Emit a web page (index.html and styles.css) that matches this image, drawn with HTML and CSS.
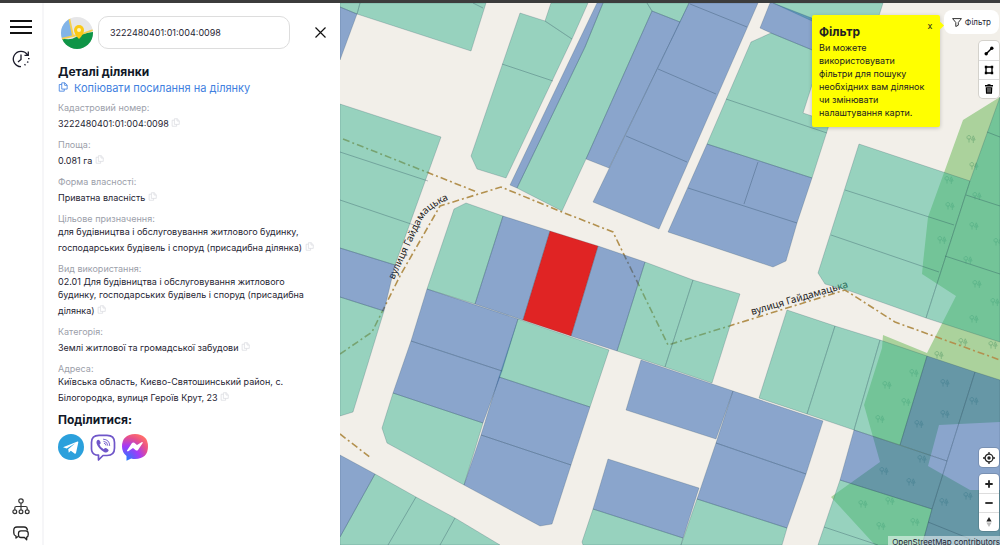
FILE: index.html
```
<!DOCTYPE html>
<html lang="uk">
<head>
  <meta charset="UTF-8">
  <meta name="viewport" content="width=device-width, initial-scale=1.0">
  <title>Кадастрова карта</title>
  <link rel="stylesheet" href="styles.css">
</head>
<body>
  <!-- Shared icons -->
  <svg class="sprite" aria-hidden="true">
    <symbol id="copy" viewBox="0 0 12 12">
      <path d="M4.500 1h3.800L11 3.700V8.500H4.500zM8 1v3h3M4.500 3H1.500v8h6V8.500" fill="none" stroke="currentColor" stroke-linejoin="round"/>
    </symbol>
    <symbol id="tree" viewBox="0 0 10 10">
      <path d="M3 1.500a2 2 0 0 0-1.500 3.400q1.500 1 2.700 0A2 2 0 0 0 3 1.500zM3 4v4.500M7.300 1.800L5.500 6h3.600zM7.300 4v5" fill="none" stroke="#3c8a5a" stroke-width=".9"/>
    </symbol>
  </svg>

  <div class="topbar"></div>
  <div class="app">
    <nav class="sidebar">
      <button class="icon-button" aria-label="Меню">
        <svg width="22" height="14" viewBox="0 0 22 14"><path d="M0 1h22M0 7h22M0 13h22" stroke="#111" stroke-width="1.800"/></svg>
      </button>
      <button class="icon-button" aria-label="Історія">
        <svg width="18" height="18" viewBox="0 0 18 18" fill="none" stroke="#1a1a2a" stroke-width="1.300">
          <path d="M9 16.700A7.700 7.700 0 1 1 15.600 5M16.300 1.500V5.300H12.500M9 4.500v5l-3 2.500"/>
          <path d="M16.800 8v1.300M16 11.500l-.6 1.200M13.500 14.400l-1 .8" stroke-width="1.500"/>
        </svg>
      </button>
      <span class="spacer"></span>
      <button class="icon-button" aria-label="Структура">
        <svg width="18" height="17" viewBox="0 0 18 17" fill="none" stroke="#333" stroke-width="1.200">
          <circle cx="9" cy="3" r="2.200"/><circle cx="2.800" cy="13.700" r="1.900"/><circle cx="9" cy="13.700" r="1.900"/><circle cx="15.200" cy="13.700" r="1.900"/>
          <path d="M9 5.200v6.600M2.800 11.800V10q0-1.500 1.500-1.500h9.400q1.500 0 1.500 1.500v1.800"/>
        </svg>
      </button>
      <button class="icon-button" aria-label="Чат">
        <svg width="16" height="15" viewBox="0 0 16 15" fill="none" stroke="#222" stroke-width="1.300" stroke-linejoin="round">
          <path d="M5 10.500l-2 1.500v-1.800Q.8 9.500.8 7V4Q.8 1 4 1h7q3 0 3.500 3.500"/>
          <path d="M8 4.800h4.700q2.500 0 2.500 2.500v1.500q0 2-1.500 2.400V13.800l-2.200-2.300H8Q5.500 11.500 5.500 9V7.300Q5.500 4.800 8 4.800z"/>
        </svg>
      </button>
    </nav>

    <aside class="panel">
      <form class="search">
        <svg class="logo" viewBox="0 0 32 32">
          <defs><clipPath id="logo-clip"><circle cx="16" cy="16" r="16"/></clipPath></defs>
          <g clip-path="url(#logo-clip)">
            <path d="M0 0h32v32H0z" fill="#e6e6e8"/>
            <path d="M0 0h8l4 19-12 3z" fill="#82b4e8"/>
            <path d="M0 21q9 3 15-1t17-5v17H0z" fill="#0f9547"/>
            <path d="M8 0l4 19L0 22M12 19q10-2 20-6" fill="none" stroke="#f5cf52" stroke-width="1.800"/>
            <path d="M18 22q-5-5-5-9a5 5 0 0 1 10 0q0 4-5 9z" fill="#fbc916"/>
            <circle cx="18" cy="13" r="2" fill="#fff3c0"/>
          </g>
        </svg>
        <input class="search-input" type="text" value="3222480401:01:004:0098" aria-label="Кадастровий номер">
        <button class="close-button" type="button" aria-label="Закрити">
          <svg width="11" height="11" viewBox="0 0 11 11"><path d="M.5.5l10 10M10.500.5l-10 10" stroke="#111" stroke-width="1.200"/></svg>
        </button>
      </form>

      <h1 class="title">Деталі ділянки</h1>
      <a class="copy-link" href="#"><svg class="copy-link-icon"><use href="#copy"/></svg>Копіювати посилання на ділянку</a>

      <dl class="details">
        <div class="detail">
          <dt>Кадастровий номер:</dt>
          <dd>3222480401:01:004:0098 <svg class="copy"><use href="#copy"/></svg></dd>
        </div>
        <div class="detail">
          <dt>Площа:</dt>
          <dd>0.081 га <svg class="copy"><use href="#copy"/></svg></dd>
        </div>
        <div class="detail">
          <dt>Форма власності:</dt>
          <dd>Приватна власність <svg class="copy"><use href="#copy"/></svg></dd>
        </div>
        <div class="detail">
          <dt>Цільове призначення:</dt>
          <dd>для будівництва і обслуговування житлового будинку, господарських будівель і споруд (присадибна ділянка) <svg class="copy"><use href="#copy"/></svg></dd>
        </div>
        <div class="detail">
          <dt>Вид використання:</dt>
          <dd>02.01 Для будівництва і обслуговування житлового будинку, господарських будівель і споруд (присадибна ділянка) <svg class="copy"><use href="#copy"/></svg></dd>
        </div>
        <div class="detail">
          <dt>Категорія:</dt>
          <dd>Землі житлової та громадської забудови <svg class="copy"><use href="#copy"/></svg></dd>
        </div>
        <div class="detail">
          <dt>Адреса:</dt>
          <dd>Київська область, Києво-Святошинський район, с. Білогородка, вулиця Героїв Крут, 23 <svg class="copy"><use href="#copy"/></svg></dd>
        </div>
      </dl>

      <h2 class="title">Поділитися:</h2>
      <div class="share">
        <a href="#" aria-label="Telegram">
          <svg width="26" height="26" viewBox="0 0 26 26"><circle cx="13" cy="13" r="13" fill="#2ba0dc"/><path d="M5 13.300L19.500 7.600q1-.2.8 1L18 19q-.4 1.200-1.500.6L12.800 16.800l-2 2-.6-3.600 7-6-8.500 5.300z" fill="#fff"/></svg>
        </a>
        <a href="#" aria-label="Viber">
          <svg width="26" height="27" viewBox="0 0 26 27" fill="none" stroke="#6f56c9" stroke-linecap="round">
            <path d="M6 21Q1.500 19.500 1.500 15V8.500Q1.500 1.300 9 1.300h8q7.500 0 7.500 7.200V14q0 7.500-7.500 7.500h-4L8.500 26v-4.800z" stroke-width="1.700" stroke-linejoin="round"/>
            <path d="M7 6.500q1.800-2 3.500 1.500.8 1.500-1 2.500 1 3.500 4.300 4.700 1.200-1.900 2.700-1 3.300 1.900 1.500 3.300-1.600 1.700-4 .4Q8.500 15 6.700 9.800 6 8 7 6.500z" fill="#6f56c9" stroke="none"/>
            <path d="M13.500 5.200q6 .3 6.200 6.300M13.800 7.300q3.800.3 4 4M14.300 9.300q1.600.2 1.700 1.800" stroke-width=".9"/>
          </svg>
        </a>
        <a href="#" aria-label="Messenger">
          <svg width="26" height="27" viewBox="0 0 26 27">
            <defs><radialGradient id="msg" cx=".15" cy="1" r="1.100"><stop offset="0" stop-color="#1a80ff"/><stop offset=".5" stop-color="#a33af7"/><stop offset=".8" stop-color="#e6508c"/><stop offset="1" stop-color="#ff6d6b"/></radialGradient></defs>
            <path d="M13 0q13 .5 13 12.500T13 25q-2 0-3.800-.5L4.500 26.700V22Q0 18.500 0 12.500 0 .5 13 0z" fill="url(#msg)"/>
            <path d="M5 16.500L10 9q1-1 2.300-.2L15 11l4.500-2.800q1.700-.5 1.200.8L16 16q-1 1-2.300.2L11 14l-4.700 3.200q-1.600.5-1.300-.7z" fill="#fff"/>
          </svg>
        </a>
      </div>
    </aside>

    <main class="map">
      <svg class="map-canvas" viewBox="340 3 660 542" preserveAspectRatio="xMidYMid slice">
        <!-- Woodland -->
        <path class="wood" fill-rule="evenodd" d="M1000 97L963 120 928 217 923 263 922 274 956 296 927 353 883 335 882 348 864 405 880 462 831 497 875 545H1000zM939 425L1000 422V490H970L928 466z"/>
        <g class="trees">
          <use href="#tree" x="966" y="134" width="10" height="10"/>
          <use href="#tree" x="969" y="161" width="10" height="10"/>
          <use href="#tree" x="944" y="175" width="10" height="10"/>
          <use href="#tree" x="945" y="201" width="10" height="10"/>
          <use href="#tree" x="972" y="191" width="10" height="10"/>
          <use href="#tree" x="969" y="221" width="10" height="10"/>
          <use href="#tree" x="937" y="235" width="10" height="10"/>
          <use href="#tree" x="963" y="255" width="10" height="10"/>
          <use href="#tree" x="993" y="237" width="10" height="10"/>
          <use href="#tree" x="972" y="279" width="10" height="10"/>
          <use href="#tree" x="990" y="297" width="10" height="10"/>
          <use href="#tree" x="969" y="314" width="10" height="10"/>
          <use href="#tree" x="958" y="337" width="10" height="10"/>
          <use href="#tree" x="988" y="340" width="10" height="10"/>
          <use href="#tree" x="934" y="350" width="10" height="10"/>
          <use href="#tree" x="909" y="368" width="10" height="10"/>
          <use href="#tree" x="882" y="380" width="10" height="10"/>
          <use href="#tree" x="901" y="397" width="10" height="10"/>
          <use href="#tree" x="875" y="414" width="10" height="10"/>
          <use href="#tree" x="940" y="378" width="10" height="10"/>
          <use href="#tree" x="940" y="409" width="10" height="10"/>
          <use href="#tree" x="969" y="396" width="10" height="10"/>
          <use href="#tree" x="914" y="419" width="10" height="10"/>
          <use href="#tree" x="917" y="454" width="10" height="10"/>
          <use href="#tree" x="879" y="466" width="10" height="10"/>
          <use href="#tree" x="906" y="477" width="10" height="10"/>
          <use href="#tree" x="939" y="497" width="10" height="10"/>
          <use href="#tree" x="963" y="491" width="10" height="10"/>
          <use href="#tree" x="858" y="499" width="10" height="10"/>
          <use href="#tree" x="885" y="496" width="10" height="10"/>
          <use href="#tree" x="876" y="521" width="10" height="10"/>
          <use href="#tree" x="910" y="517" width="10" height="10"/>
        </g>

        <!-- Tracks and street names -->
        <path class="track" d="M343 139L477 192M340 354L372 332 401 274 440 206 501 187 562 212 613 232 668 345 845 290 895 322 1000 360M340 434L371 458"/>
        <path id="street-west" d="M394 280L421 222Q427 209 448 200" fill="none"/>
        <path id="street-east" d="M752 315L860 284" fill="none"/>
        <text class="street"><textPath href="#street-west">вулиця Гайдамацька</textPath></text>
        <text class="street"><textPath href="#street-east">вулиця Гайдамацька</textPath></text>

        <!-- Green parcels -->
        <g class="parcel green">
          <path d="M357 14L471 51 486 3H360z"/>
          <path d="M340 3H360L357 14 340 7z"/>
          <path d="M520 13L545 21 572 39 506 178 477 169 471 156z"/>
          <path d="M551 3H588L572 39 545 21z"/>
          <path d="M603 3H647L652 11 586 159 562 211 517 188 585 47z"/>
          <path d="M647 3H689L680 22 652 11z"/>
          <path d="M773 3H883L871 41 812 21z"/>
          <path d="M751 42L771 33 822 54 803 113 830 122 812 178 707 144z"/>
          <path d="M340 104L441 137 395 265 340 248z"/>
          <path d="M340 297L384 311 353 412 340 416z"/>
          <path d="M375 474L416 497 455 518 500 545H340V537z"/>
          <path d="M466 203L503 216 475 304 427 289 454 209z"/>
          <path d="M645 262L693 280 665 367 617 351z"/>
          <path d="M693 280L740 294 712 383 665 367z"/>
          <path d="M518 319L609 350 590 407 499 377z"/>
          <path d="M393 393L483 423 464 485 387 443 382 428z"/>
          <path d="M593 509L683 538 681 545H583L582 542z"/>
          <path d="M697 499L787 528 782 545H681z"/>
          <path d="M787 310L835 326 807 414 759 398z"/>
          <path d="M835 326L880 340 854 430 807 414z"/>
          <path d="M880 340L927 356 900 445 854 430z"/>
          <path d="M840 480L932 509 922 545H818z"/>
          <path d="M859 144L970 181 926 318 850 291 825 284 818 273z"/>
          <path d="M1000 97L970 181 926 318 1000 342z"/>
        </g>

        <!-- Blue parcels -->
        <g class="parcel blue">
          <path d="M340 7L357 14 340 60z"/>
          <path d="M597 3H603L585 47 517 188 510 185z"/>
          <path d="M652 11L680 22 609 168 586 159z"/>
          <path d="M689 3H758L659 229 593 202z"/>
          <path d="M770 3H773L871 41 864 69 822 54 771 33 760 28z"/>
          <path d="M707 144L812 178 797 223 786 261 773 267 668 232z"/>
          <path d="M340 248L395 265 384 311 340 297z"/>
          <path d="M340 455L375 474 340 537z"/>
          <path d="M503 216L550 231 523 320 475 304z"/>
          <path d="M598 246L645 262 617 351 571 336z"/>
          <path d="M427 289L518 319 502 371 411 341z"/>
          <path d="M411 341L502 371 483 423 393 393z"/>
          <path d="M499 377L590 407 571 465 481 435z"/>
          <path d="M481 435L571 465 552 524 540 526 464 485z"/>
          <path d="M641 360L733 391 716 439 626 410z"/>
          <path d="M733 391L823 421 806 474 716 443z"/>
          <path d="M716 443L806 474 787 528 697 499z"/>
          <path d="M608 459L699 488 683 538 593 509z"/>
          <path d="M927 356L975 372 947 461 900 445z"/>
          <path d="M975 372L1000 380V545H922L932 509 947 461z"/>
          <path d="M854 430L947 461 932 509 840 480z"/>
        </g>

        <path class="parcel selected" d="M550 231L598 246 571 336 523 320z"/>

        <!-- Inner parcel borders -->
        <path class="border" d="M473 3L483 8M502 64L553 81M690 4L747 27M658 69L716 94M626 136L687 162M726 99L827 133M688 188L797 223M758 162L744 204M845 190L954 225M831 235L939 272M987 132L1000 137M966 195L1000 206M945 256L1000 274M340 152L428 181M340 200L414 225M416 497L388 545M455 518L440 545M824 527L878 545M928 522L985 545"/>
      </svg>

      <div class="tooltip">
        <button class="tooltip-close" aria-label="Закрити підказку">x</button>
        <h3 class="tooltip-title">Фільтр</h3>
        <p>Ви можете використовувати фільтри для пошуку необхідних вам ділянок чи змінювати налаштування карти.</p>
      </div>

      <div class="controls">
        <button class="filter-button">
          <svg width="10" height="9" viewBox="0 0 10 9"><path d="M.6.6h8.800L6.300 4.500v2.700L3.800 8.500v-4z" fill="none" stroke="#333" stroke-linejoin="round"/></svg>
          Фільтр
        </button>
        <div class="control-group">
          <button aria-label="Лінія"><svg width="10" height="10" viewBox="0 0 10 10"><path d="M2 8l6-6" stroke="#000" stroke-width="1.500"/><circle cx="2.200" cy="7.800" r="1.700"/><circle cx="7.800" cy="2.200" r="1.700"/></svg></button>
          <button aria-label="Полігон"><svg width="10" height="10" viewBox="0 0 10 10"><path d="M2 2h6v6H2z" fill="none" stroke="#000" stroke-width="1.300"/><path d="M.8.8h2.400v2.400H.8zM6.800.8h2.400v2.400H6.800zM.8 6.800h2.400v2.400H.8zM6.800 6.800h2.400v2.400H6.800z"/></svg></button>
          <button aria-label="Видалити"><svg width="10" height="10" viewBox="0 0 10 10"><path d="M3.500 1V.2h3V1H9v1.500H1V1zM1.700 3.200h6.600L8 9.800H2z"/><path d="M4 4v4.500M6 4v4.500" stroke="#fff" stroke-width=".7"/></svg></button>
        </div>
        <span class="spacer"></span>
        <div class="control-group">
          <button aria-label="Моє місце"><svg width="12" height="12" viewBox="0 0 12 12"><circle cx="6" cy="6" r="3.900" fill="none" stroke="#222" stroke-width="1.300"/><circle cx="6" cy="6" r="1.700" fill="#222"/><path d="M6 0v2M6 10v2M0 6h2M10 6h2" stroke="#222" stroke-width="1.300"/></svg></button>
        </div>
        <div class="control-group">
          <button aria-label="Наблизити"><svg width="10" height="10" viewBox="0 0 10 10"><path d="M5 1.300v7.400M1.300 5h7.400" stroke="#222" stroke-width="1.800"/></svg></button>
          <button aria-label="Віддалити"><svg width="10" height="10" viewBox="0 0 10 10"><path d="M1.300 5h7.400" stroke="#222" stroke-width="1.800"/></svg></button>
          <button aria-label="Північ"><svg width="10" height="12" viewBox="0 0 10 12"><path d="M5 1l2.600 4.500H2.400z" fill="#222"/><path d="M5 11L2.400 6.500h5.200z" fill="#bbb"/></svg></button>
        </div>
      </div>
      <a class="attribution" href="#">OpenStreetMap contributors</a>
    </main>
  </div>
</body>
</html>
```
FILE: styles.css
```
* {
  box-sizing: border-box;
  margin: 0;
  padding: 0;
}

body {
  height: 100vh;
  display: flex;
  flex-direction: column;
  overflow: hidden;
  font-family: Inter, "Liberation Sans", sans-serif;
  font-size: 9px;
  line-height: 13px;
  color: #1f2533;
  background: #fff;
}

button {
  display: flex;
  align-items: center;
  justify-content: center;
  border: none;
  background: none;
  font: inherit;
  color: inherit;
  cursor: pointer;
}

a {
  color: inherit;
  text-decoration: none;
}

.sprite {
  display: none;
}

.spacer {
  flex: 1;
}

.topbar {
  flex: none;
  height: 3px;
  background: #3c3c3c;
}

.app {
  flex: 1;
  display: flex;
  min-height: 0;
}

/* Left icon bar */
.sidebar {
  flex: none;
  width: 44px;
  padding: 12px 0 0;
  display: flex;
  flex-direction: column;
  align-items: center;
  gap: 3px;
  border-right: 2px solid #f6f6f8;
}

.icon-button {
  width: 32px;
  height: 24px;
}

.icon-button:nth-child(2) {
  height: 34px;
}

/* Details panel */
.panel {
  flex: none;
  width: 296px;
  padding: 13px 13px 0 14px;
}

.search {
  display: flex;
  align-items: center;
  padding-left: 3px;
  margin-bottom: 15px;
}

.logo {
  flex: none;
  width: 32px;
  height: 32px;
}

.search-input {
  flex: 1;
  min-width: 0;
  height: 33px;
  margin: 0 18px 0 5px;
  padding: 0 11px;
  border: 1px solid #ddd;
  border-radius: 10px;
  font: inherit;
  color: inherit;
}

.close-button {
  width: 24px;
  height: 24px;
  margin-right: -5px;
}

.title {
  font-size: 12px;
  line-height: 16px;
  font-weight: 700;
  color: #111827;
}

.copy-link {
  display: flex;
  gap: 6px;
  font-size: 11px;
  line-height: 17px;
  color: #3f7fe0;
}

.copy-link-icon {
  width: 10px;
  height: 10px;
  margin-top: 2px;
}

.details {
  padding: 4px 8px 0 0;
}

.detail {
  padding-bottom: 8px;
}

.detail dt {
  color: #9ca0aa;
}

.copy {
  width: 9px;
  height: 9px;
  margin-top: 4px;
  vertical-align: 0;
  color: #d9dbe0;
}

.share {
  display: flex;
  gap: 6px;
  padding-top: 6px;
}

/* Map */
.map {
  position: relative;
  flex: 1;
  min-width: 0;
  overflow: hidden;
  background: #f2efe9;
}

.map-canvas {
  display: block;
  width: 100%;
  height: 100%;
}

.wood {
  fill: #abd29c;
}

.trees {
  opacity: 0.4;
}

.track {
  fill: none;
  stroke: #b3914f;
  stroke-width: 1.6px;
  stroke-dasharray: 7 3 2 3;
}

.street {
  font-family: "Noto Sans", sans-serif;
  font-size: 10px;
  fill: #222;
}

.parcel {
  fill-opacity: 0.5;
  stroke: #1e3c50;
  stroke-opacity: 0.4;
  stroke-width: 0.5px;
}

.green {
  fill: #3cb593;
}

.blue {
  fill: #225baf;
}

.selected {
  fill: #e02424;
  fill-opacity: 1;
}

.border {
  fill: none;
  stroke: #1e3c50;
  stroke-opacity: 0.6;
  stroke-width: 0.5px;
}

.tooltip {
  position: absolute;
  top: 12px;
  right: 60px;
  width: 128px;
  padding: 8px 12px 8px 7px;
  border-radius: 2px;
  background: #ff0;
  color: #222;
  box-shadow: 0 1px 4px rgba(0, 0, 0, 0.2);
}

/* Pointer towards the filter button */
.tooltip::after {
  content: "";
  position: absolute;
  top: 8px;
  right: -3px;
  width: 5px;
  height: 5px;
  background: #ff0;
  transform: rotate(45deg);
}

.tooltip-close {
  position: absolute;
  top: 4px;
  right: 4px;
  width: 12px;
}

.tooltip-title {
  font-size: 12px;
  line-height: 18px;
  font-weight: 700;
}

.controls {
  position: absolute;
  top: 7px;
  right: 1px;
  bottom: 14px;
  display: flex;
  flex-direction: column;
  align-items: flex-end;
  gap: 7px;
}

.filter-button {
  gap: 3px;
  height: 24px;
  padding: 0 8px;
  border-radius: 8px;
  background: #fff;
  font-size: 8px;
}

.control-group {
  width: 20px;
  border-radius: 4px;
  background: #fff;
  box-shadow: 0 0 0 1px rgba(0, 0, 0, 0.12);
}

.control-group button {
  width: 100%;
  height: 19px;
}

.control-group button + button {
  border-top: 1px solid #ddd;
}

.attribution {
  position: absolute;
  right: 0;
  bottom: -4px;
  padding: 0 0 0 4px;
  white-space: nowrap;
  font-size: 8px;
  background: rgba(255, 255, 255, 0.5);
}
```
